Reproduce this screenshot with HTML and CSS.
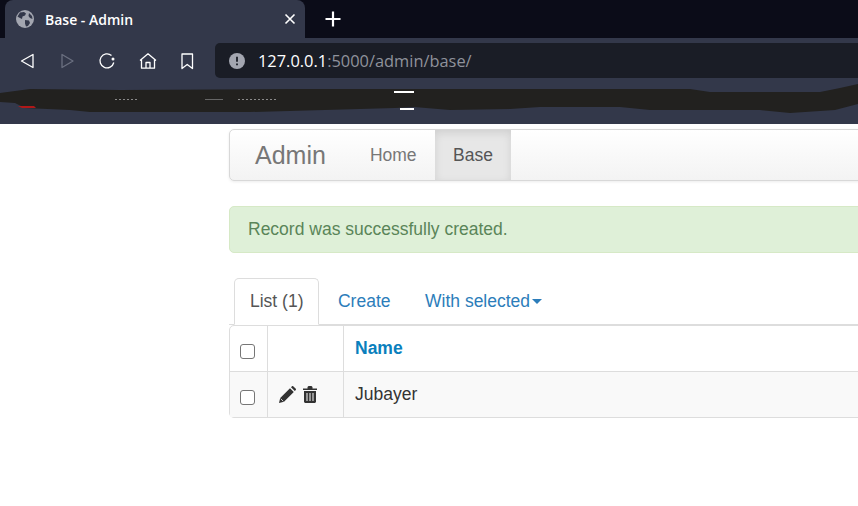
FILE: index.html
```html
<!DOCTYPE html>
<html lang="en">
<head>
    <meta charset="UTF-8">
    <title>Base - Admin</title>
    <link rel="stylesheet" href="styles.css">
</head>
<body>

<div class="browser">
    <div class="tabbar">
        <div class="tab">
            <svg class="globe" width="18" height="18" viewBox="0 0 18 18">
                <circle cx="9" cy="9" r="9" fill="#a3a6b0"/>
                <path d="M4 2.500 8 2l2 1.500-1 2-2.500 1L6 9 3 7.500 1.500 6.500zM9 10l4 .5 1 2.500-2 3-2 .5-1-3zM13 3l3 3 .5 3-2.500-1-1.500-2z" fill="#33384a"/>
            </svg>
            <span class="tab-title">Base - Admin</span>
            <svg class="tab-close" width="12" height="12" viewBox="0 0 12 12">
                <path d="M1.500 1.500l9 9M10.500 1.500l-9 9" stroke="#fff" stroke-width="1.600"/>
            </svg>
        </div>
        <svg class="tab-new" width="16" height="16" viewBox="0 0 16 16">
            <path d="M8 .5v15M.5 8h15" stroke="#fff" stroke-width="2.200"/>
        </svg>
    </div>
    <div class="toolbar">
        <div class="nav-icons">
            <svg width="16" height="18" viewBox="0 0 16 18" fill="none" stroke="#fff" stroke-width="1.300" stroke-linejoin="round"><path d="M13 2.500 1.500 9 13 15.500z"/></svg>
            <svg width="16" height="18" viewBox="0 0 16 18" fill="none" stroke="#6b7080" stroke-width="1.300" stroke-linejoin="round"><path d="M3 2.500 14 9 3 15.500z"/></svg>
            <svg width="18" height="18" viewBox="0 0 18 18" fill="none" stroke="#fff" stroke-width="1.300"><path d="M13.500 3.500A7 7 0 1 0 15.800 10.500"/><circle cx="15" cy="7" r="1.500" fill="#fff" stroke="none"/></svg>
            <svg width="18" height="18" viewBox="0 0 18 18" fill="none" stroke="#fff" stroke-width="1.300" stroke-linejoin="round"><path d="M1 8.500 9 1.800l8 6.700M2.500 7.500v8.700h13V7.500M7 16.200V10.500h4v5.700"/></svg>
            <svg width="14" height="18" viewBox="0 0 14 18" fill="none" stroke="#fff" stroke-width="1.300" stroke-linejoin="round"><path d="M2 2h10.500v14.500L7.200 12.500 2 16.500z"/></svg>
        </div>
        <div class="addressbar">
            <svg width="16" height="16" viewBox="0 0 16 16"><circle cx="8" cy="8" r="8" fill="#a3a6b0"/><path d="M8 3.800v5M8 10.500v1.800" stroke="#1a1d26" stroke-width="1.800"/></svg>
            <span class="url"><b>127.0.0.1</b>:5000/admin/base/</span>
        </div>
    </div>
    <svg class="redaction" width="858" height="40" viewBox="0 84 858 40">
        <path d="M0 93 30 89 120 90 300 89 430 89 690 89 710 92 820 92 840 88 858 84V104L835 110 790 113 760 110 650 110 620 107 540 107 510 109 450 110 414 107 395 108 250 112 90 112 70 110 25 108 15 103 0 102z" fill="#22211f"/>
        <path d="M394 91h20v2h-20zM400 108h14v2h-14z" fill="#fff"/>
        <path d="M18 106h16l2 2H22z" fill="#b01818"/>
        <path d="M115 99.500h22M238 99.500h38" stroke="#8a8a8a" stroke-dasharray="2 2"/>
        <path d="M205 99.500h18" stroke="#666"/>
    </svg>
</div>

<div class="content">
    <nav class="navbar">
        <span class="brand">Admin</span>
        <a class="nav-link">Home</a>
        <a class="nav-link active">Base</a>
    </nav>

    <div class="alert">Record was successfully created.</div>

    <div class="tabs">
        <a class="tab-link current">List (1)</a>
        <a class="tab-link">Create</a>
        <a class="tab-link">With selected<span class="caret"></span></a>
    </div>

    <div class="table">
        <div class="row head">
            <div class="cell check"><span class="box"></span></div>
            <div class="cell actions"></div>
            <div class="cell name"><b>Name</b></div>
        </div>
        <div class="row odd">
            <div class="cell check"><span class="box"></span></div>
            <div class="cell actions">
                <svg width="17" height="17" viewBox="0 0 17 17"><path d="M0 17l1.200-5L11 2.200l3.800 3.800L5 15.800zM12 1.200l1-1a1 1 0 0 1 1.200 0l2.600 2.600a1 1 0 0 1 0 1.200l-1 1z" fill="#333"/><path d="M1.700 12.700l2.600 2.600" stroke="#f9f9f9" stroke-width=".8"/></svg>
                <svg width="14" height="17" viewBox="0 0 14 17"><path d="M0 2.500h4.500V1l1-1h3l1 1v1.500H14V4H0zM1 5h12v11l-1 1H2l-1-1zM3.500 7v8h1V7zM6.500 7v8h1V7zM9.500 7v8h1V7z" fill="#333" fill-rule="evenodd"/></svg>
            </div>
            <div class="cell name">Jubayer</div>
        </div>
    </div>
</div>

</body>
</html>
```

FILE: styles.css
```css
* {
    box-sizing: border-box;
}
body {
    margin: 0;
    font-family: "Liberation Sans", Arial, sans-serif;
    font-size: 17.5px;
    color: #333;
    background-color: #fff;
    overflow: hidden;
}

/* browser frame */
.browser {
    position: relative;
    height: 124px;
    background-color: #33384a;
    font-family: "Open Sans", sans-serif;
}
.tabbar {
    display: flex;
    align-items: center;
    height: 38px;
    padding-left: 5px;
    background-color: #0b0c18;
}
.tab {
    display: flex;
    align-items: center;
    width: 300px;
    height: 38px;
    padding: 0 9px 0 11px;
    background-color: #33384a;
    border-radius: 8px 8px 0 0;
}
.tab-title {
    flex: 1;
    margin-left: 11px;
    font-size: 14px;
    font-weight: 600;
    color: #fff;
}
.tab-new {
    margin-left: 20px;
}
.toolbar {
    display: flex;
    align-items: center;
    height: 40px;
    padding: 5px 0 0 20px;
}
.nav-icons {
    display: flex;
    align-items: center;
    gap: 23px;
    width: 195px;
}
.addressbar {
    display: flex;
    align-items: center;
    flex: 1;
    height: 35px;
    padding-left: 14px;
    background-color: #1a1d26;
    border-radius: 5px 0 0 5px;
}
.url {
    margin-left: 13px;
    font-size: 16.4px;
    color: #8f929b;
}
.url b {
    font-weight: 400;
    color: #fff;
}
.redaction {
    position: absolute;
    left: 0;
    top: 84px;
}

/* page */
.content {
    padding: 5px 0 0 229px;
    width: 900px;
}
.navbar {
    display: flex;
    align-items: stretch;
    height: 52px;
    background: linear-gradient(to bottom, #fff, #f3f3f3);
    border: 1px solid #d8d8d8;
    border-radius: 5px;
    box-shadow: 0 1px 3px rgba(0, 0, 0, 0.08);
}
.brand {
    align-self: center;
    padding: 0 25.5px 0 25px;
    font-size: 25px;
    color: #777;
}
.nav-link {
    display: flex;
    align-items: center;
    padding: 0 18.5px 0 18.5px;
    color: #777;
}
.nav-link.active {
    padding: 0 18px;
    color: #555;
    background-color: #e7e7e7;
    box-shadow: inset 0 3px 9px rgba(0, 0, 0, 0.1);
}
.alert {
    height: 47px;
    margin-top: 25px;
    padding: 0 18px;
    line-height: 45px;
    color: #5a8558;
    background-color: #dff0d8;
    border: 1px solid #d6e9c6;
    border-radius: 5px;
}
.tabs {
    display: flex;
    height: 47px;
    margin-top: 25px;
    padding-left: 5px;
    border-bottom: 1px solid #ddd;
}
.tab-link {
    display: flex;
    align-items: center;
    height: 47px;
    padding: 0 15px;
    margin-right: 2.5px;
    color: #2c7dba;
    border: 1px solid transparent;
    border-radius: 5px 5px 0 0;
}
.tab-link.current {
    color: #555;
    background-color: #fff;
    border-color: #ddd #ddd #fff;
}
.caret {
    margin-left: 2px;
    border-top: 5px solid #2c7dba;
    border-left: 5px solid transparent;
    border-right: 5px solid transparent;
}
.table {
    border: 1px solid #ddd;
    border-radius: 5px;
}
.row {
    display: flex;
    height: 45px;
}
.row.odd {
    height: 46px;
    background-color: #f9f9f9;
    border-top: 1px solid #ddd;
}
.cell {
    display: flex;
    align-items: center;
    padding: 0 10px;
}
.check {
    width: 38px;
    border-right: 1px solid #ddd;
}
.actions {
    gap: 7px;
    width: 76px;
    padding-left: 11px;
    border-right: 1px solid #ddd;
}
.name {
    padding-left: 11px;
}
.name b {
    color: #0a7fbd;
}
.box {
    width: 15px;
    height: 15px;
    margin-top: 5px;
    background-color: #fff;
    border: 1px solid #767676;
    border-radius: 3px;
}
```
